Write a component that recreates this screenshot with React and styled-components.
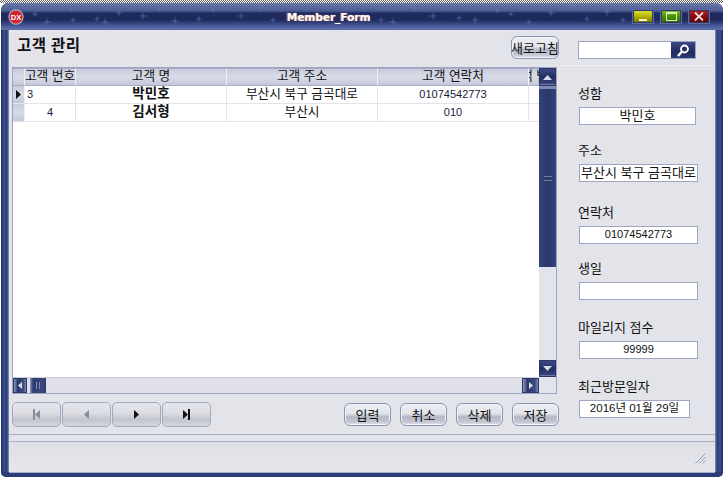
import React from "react";
import styled, { createGlobalStyle, css } from "styled-components";

const Global = createGlobalStyle`
  html, body { margin: 0; padding: 0; background: #fff; }
  * { box-sizing: border-box; }
  body { font-family: "Liberation Sans", "Noto Sans CJK KR", sans-serif; font-size: 12.7px; color: #111; }
`;

const Page = styled.div`
  width: 723px;
  height: 479px;
  padding: 0 0 2px 1px;
  background: #fff;
  overflow: hidden;
`;
const TopEdge = styled.div`
  height: 3px;
  margin-left: -1px;
  background-image: repeating-conic-gradient(#666 0 25%, #fff 0 50%);
  background-size: 2px 2px;
`;
const Frame = styled.div`
  width: 722px;
  height: 474px;
  border-radius: 7px 7px 5px 5px;
  display: flex;
  flex-direction: column;
  background: linear-gradient(90deg, #1d2c63 0, #3c5090 3px, #2b3c78 6px, #8b98c0 8px, #8b98c0 calc(100% - 8px), #2b3c78 calc(100% - 6px), #3c5090 calc(100% - 3px), #1d2c63 100%);
  box-shadow: inset 0 -5px 0 #2b3c78;
`;
const TitleBar = styled.div`
  position: relative;
  height: 27px;
  flex: none;
  border-radius: 7px 7px 0 0;
  overflow: hidden;
  display: flex;
  align-items: center;
  padding-left: 286px;
  background: linear-gradient(180deg, #6a78a8 0, #5f6fa2 3px, #4c5c92 8px, #1f2b60 10px, #1e2a5c 17px, #2c3a72 19px, #4a5a98 23px, #6272ac 27px);
`;
const Stars = styled.svg`
  position: absolute;
  inset: 0;
`;
const TitleText = styled.span`
  position: relative;
  font-family: "DejaVu Sans", sans-serif;
  font-weight: 700;
  font-size: 10.5px;
  color: #fff;
  text-shadow: -1px 0 1px #c98f70;
`;
const AppIcon = styled.svg`
  position: absolute;
  left: 7px;
  top: 6px;
`;
const WinButtons = styled.div`
  position: absolute;
  right: 14px;
  top: 7px;
  display: flex;
  gap: 8px;
`;
const WinButton = styled.div`
  width: 20px;
  height: 13px;
  border: 1px solid #2d3a6c;
  outline: 1px solid #5c6a9c;
  display: flex;
  align-items: center;
  justify-content: center;
  background: ${(p) => p.$bg};
`;
const Body = styled.div`
  flex: 1;
  margin: 0 8px 5px 8px;
  background: #e3e4ea;
  display: flex;
  flex-direction: column;
  min-height: 0;
  box-shadow: 0 1px 0 #a6aeca;
`;
const Main = styled.div`
  flex: none;
  height: 404px;
  display: flex;
`;
const LeftCol = styled.div`
  width: 551px;
  padding: 6px 0 0 3px;
  display: flex;
  flex-direction: column;
  flex: none;
`;
const Header = styled.div`
  height: 31px;
  display: flex;
  align-items: flex-start;
  justify-content: space-between;
  padding-right: 1px;
`;
const Heading = styled.h1`
  margin: 0 0 0 5px;
  font-size: 15.5px;
  line-height: 20px;
  letter-spacing: 0.4px;
  font-weight: 700;
  color: #111;
`;
const glossy = css`
  background: linear-gradient(180deg, #eceef3 0, #e2e4ea 45%, #b4b8c6 62%, #c4c7d2 85%, #e2e4ea 100%);
  border: 1px solid #8d93b0;
  border-radius: 6px;
  box-shadow: inset 0 0 0 1px #f3f4f7;
  color: #111;
  font-family: inherit;
  font-size: 13px;
  padding: 0;
  display: flex;
  align-items: center;
  justify-content: center;
  white-space: nowrap;
  overflow: hidden;
`;
const RefreshButton = styled.button`
  ${glossy}
  width: 48px;
  height: 23px;
`;
const Grid = styled.div`
  width: 545px;
  height: 327px;
  border: 1px solid #9da4c4;
  background: #fff;
  display: grid;
  grid-template-columns: 1fr 17px;
  grid-template-rows: 1fr 16px;
`;
const Table = styled.div`
  overflow: hidden;
  display: flex;
  flex-direction: column;
`;
const columns = "12px 51px 151px 151px 151px 12px";
const HeadRow = styled.div`
  display: grid;
  grid-template-columns: ${columns};
  height: 18px;
  flex: none;
`;
const HeadCell = styled.div`
  background: linear-gradient(180deg, #c7cbdc 0, #d9dce7 50%, #c3c8da 100%);
  border-top: 1px solid #a6acc8;
  border-right: 1px solid #eef0f5;
  border-bottom: 1px solid #a6acc8;
  display: flex;
  justify-content: center;
  line-height: 15px;
  white-space: nowrap;
  overflow: hidden;
`;
const Row = styled.div`
  display: grid;
  grid-template-columns: ${columns};
  height: 18px;
  flex: none;
  border-bottom: 1px solid #e3e4ea;
`;
const Indicator = styled.div`
  background: linear-gradient(180deg, #c7cbdc, #d9dce7 50%, #c3c8da);
  display: flex;
  align-items: center;
  justify-content: center;
  border-right: 1px solid #eef0f5;
`;
const Cell = styled.div`
  border-right: 1px solid #e3e4ea;
  line-height: 16px;
  white-space: nowrap;
  overflow: hidden;
  text-align: ${(p) => p.$align || "center"};
  padding-left: ${(p) => p.$pad || 0}px;
  font-weight: ${(p) => (p.$bold ? 700 : 400)};
  font-size: ${(p) => (p.$bold ? "13.5px" : p.$num ? "11px" : "inherit")};
  color: ${(p) => (p.$num ? "#1a1a40" : "#111")};
`;
const VScroll = styled.div`
  display: flex;
  flex-direction: column;
  background: #e3e4ea;
`;
const ScrollButton = styled.div`
  flex: none;
  display: flex;
  align-items: center;
  justify-content: center;
  width: ${(p) => p.$w || "100%"};
  height: ${(p) => p.$h || "100%"};
  background: ${(p) => (p.$wide ? "linear-gradient(90deg,#8f99bd,#2a3768 30%,#3d4c84 80%,#7f8ab2)" : "linear-gradient(180deg,#3d4c84,#222e60 50%,#34427a 90%,#8a94b8)")};
  border: 1px solid #2a3768;
`;
const VThumb = styled.div`
  flex: none;
  height: 181px;
  display: flex;
  align-items: center;
  justify-content: center;
  background: linear-gradient(90deg, #35437a, #2a3768 50%, #35437a);
  border-top: 3px solid #7f8ab2;
`;
const VTrack = styled.div`
  flex: 1;
`;
const Grip = styled.div`
  width: 8px;
  height: 5px;
  border-top: 1px solid #6f7ba8;
  border-bottom: 1px solid #6f7ba8;
`;
const HScroll = styled.div`
  display: flex;
  background: #dfe0e8;
  border-top: 1px solid #c9ccda;
`;
const HThumb = styled.div`
  width: 16px;
  margin-left: 3px;
  background: linear-gradient(90deg, #8f99bd, #2f3c70 20%, #3a4880 80%, #2a3768);
  display: flex;
  align-items: center;
  justify-content: center;
  gap: 2px;
`;
const HGrip = styled.i`
  width: 1px;
  height: 7px;
  background: #7f8ab2;
`;
const HSpacer = styled.div`
  flex: 1;
`;
const Corner = styled.div`
  background: #e3e4ea;
`;
const Footer = styled.div`
  display: flex;
  justify-content: space-between;
  padding-top: 8px;
  width: 547px;
`;
const NavGroup = styled.div`
  display: flex;
  gap: 1px;
`;
const NavButton = styled.button`
  width: 49px;
  height: 25px;
  border: 1px solid #a4a8bc;
  border-radius: 5px;
  padding: 0;
  background: linear-gradient(180deg, #e6e7ec 0, #dcdde3 45%, #c3c5ce 70%, #d5d6dd 100%);
  display: flex;
  align-items: center;
  justify-content: center;
`;
const ActionGroup = styled.div`
  display: flex;
  gap: 9px;
  padding-top: 1px;
`;
const ActionButton = styled.button`
  ${glossy}
  width: 47px;
  height: 23px;
`;
const RightCol = styled.div`
  flex: 1;
  display: flex;
  flex-direction: column;
`;
const SearchArea = styled.div`
  height: 36px;
  padding: 11px 0 0 18px;
  flex: none;
  border-bottom: 1px solid #f0f1f5;
`;
const SearchBox = styled.div`
  width: 118px;
  height: 18px;
  background: #fff;
  border: 1px solid #9da4c4;
  display: flex;
  justify-content: flex-end;
`;
const SearchButton = styled.div`
  width: 24px;
  background: linear-gradient(180deg, #3a4880, #1f2b60 60%, #2c3a72);
  display: flex;
  align-items: center;
  justify-content: center;
`;
const Fields = styled.div`
  padding: 0 0 0 18px;
  display: flex;
  flex-direction: column;
`;
const Label = styled.label`
  display: block;
  line-height: 16px;
  font-size: 13px;
  margin-top: ${(p) => p.$top}px;
  margin-bottom: 5px;
`;
const Value = styled.div`
  margin-left: 1px;
  height: 18px;
  width: ${(p) => p.$w}px;
  background: #fff;
  border: 1px solid #9da4c4;
  line-height: 15px;
  text-align: center;
  white-space: nowrap;
  overflow: hidden;
  font-size: ${(p) => p.$size || 13}px;
`;
const Divider = styled.div`
  height: 8px;
  flex: none;
  border-top: 1px solid #a6aeca;
  border-bottom: 1px solid #a6aeca;
`;
const Status = styled.div`
  flex: 1;
  display: flex;
  justify-content: flex-end;
  align-items: flex-end;
  padding: 0 9px 8px 0;
  background: linear-gradient(180deg, #dfe0e6, #e6e7ec);
`;

const starSpots = [
  [34,14,2],[46,22,3],[70,9,1],[72,20,2],[96,19,2],[104,22,3],[118,13,2],[142,16,3],[158,9,1],[174,21,3],[198,19,2],[212,10,1],[240,16,2],
  [258,8,3],[272,20,2],[380,20,2],[392,22,3],[414,8,2],[432,16,3],[458,18,2],[474,20,3],[496,10,2],[510,14,1],[528,22,2],[550,13,3],[572,6,2],[586,19,2],[606,12,3],[622,20,2],[642,6,2],[672,20,2],
];

const Star = ({ x, y, s }) => (
  <path
    d={`M${x} ${y - 2 - s}L${x + 0.8} ${y - 0.8}L${x + 2 + s} ${y}L${x + 0.8} ${y + 0.8}L${x} ${y + 2 + s}L${x - 0.8} ${y + 0.8}L${x - 2 - s} ${y}L${x - 0.8} ${y - 0.8}Z`}
    fill="#6a7cbc"
    opacity="0.5"
  />
);

const Arrow = ({ dir, color = "#111", w = 5, h = 9 }) => {
  const pts = {
    right: `0,0 ${w},${h / 2} 0,${h}`,
    left: `${w},0 0,${h / 2} ${w},${h}`,
  }[dir];
  return (
    <svg width={w} height={h} viewBox={`0 0 ${w} ${h}`}>
      <polygon points={pts} fill={color} />
    </svg>
  );
};

const Tri = ({ up }) => (
  <svg width="9" height="5" viewBox="0 0 9 5">
    <polygon points={up ? "0,5 4.5,0 9,5" : "0,0 4.5,5 9,0"} fill="#d7dcec" />
  </svg>
);

const EdgeArrow = ({ right, color }) => (
  <svg width="7" height="11" viewBox="0 0 7 11">
    {right ? (
      <>
        <polygon points="0,1 5,5.5 0,10" fill={color} />
        <rect x="5" y="0" width="2" height="11" fill={color} />
      </>
    ) : (
      <>
        <rect x="0" y="0" width="2" height="11" fill={color} />
        <polygon points="7,1 2,5.5 7,10" fill={color} />
      </>
    )}
  </svg>
);

export default function App() {
  return (
    <Page>
      <Global />
      <TopEdge />
      <Frame>
        <TitleBar>
          <Stars width="722" height="27">
            {starSpots.map(([x, y, s], i) => (
              <Star key={i} x={x} y={y - 3} s={s} />
            ))}
          </Stars>
          <AppIcon width="16" height="16" viewBox="0 0 16 16">
            <circle cx="8" cy="8" r="7.7" fill="#aab0c4" />
            <circle cx="8" cy="8" r="6.6" fill="#d3242f" />
            <text x="8" y="10.6" textAnchor="middle" fontSize="7.5" fontWeight="700" fill="#fff" fontFamily="Liberation Sans, sans-serif">DX</text>
          </AppIcon>
          <TitleText>Member_Form</TitleText>
          <WinButtons>
            <WinButton $bg="linear-gradient(180deg,#dcdc30,#b8b800 45%,#7c7c00 100%)">
              <svg width="9" height="10" viewBox="0 0 9 10"><rect x="0" y="7" width="8" height="2" fill="#f4f4c8" /></svg>
            </WinButton>
            <WinButton $bg="linear-gradient(180deg,#7cbc20,#4f9600 45%,#2f6c00 100%)">
              <svg width="11" height="9" viewBox="0 0 11 9"><rect x="0.5" y="0.5" width="10" height="8" fill="none" stroke="#d8eec0" /><rect x="0" y="0" width="11" height="2" fill="#d8eec0" /></svg>
            </WinButton>
            <WinButton $bg="linear-gradient(180deg,#b82020,#8c0c0c 45%,#640404 100%)">
              <svg width="10" height="9" viewBox="0 0 10 9"><path d="M1 0.5L9 8.5M9 0.5L1 8.5" stroke="#f2dcdc" strokeWidth="1.8" /></svg>
            </WinButton>
          </WinButtons>
        </TitleBar>
        <Body>
          <Main>
            <LeftCol>
              <Header>
                <Heading>고객 관리</Heading>
                <RefreshButton>새로고침</RefreshButton>
              </Header>
              <Grid>
                <Table>
                  <HeadRow>
                    <HeadCell />
                    <HeadCell>고객 번호</HeadCell>
                    <HeadCell>고객 명</HeadCell>
                    <HeadCell>고객 주소</HeadCell>
                    <HeadCell>고객 연락처</HeadCell>
                    <HeadCell>고객 번호</HeadCell>
                  </HeadRow>
                  <Row>
                    <Indicator><Arrow dir="right" w={5} h={9} /></Indicator>
                    <Cell $num $align="left" $pad={2}>3</Cell>
                    <Cell $bold>박민호</Cell>
                    <Cell>부산시 북구 금곡대로</Cell>
                    <Cell $num>01074542773</Cell>
                    <Cell />
                  </Row>
                  <Row>
                    <Indicator />
                    <Cell $num>4</Cell>
                    <Cell $bold>김서형</Cell>
                    <Cell>부산시</Cell>
                    <Cell $num>010</Cell>
                    <Cell />
                  </Row>
                </Table>
                <VScroll>
                  <ScrollButton $h="18px"><Tri up /></ScrollButton>
                  <VThumb><Grip /></VThumb>
                  <VTrack />
                  <ScrollButton $h="17px"><Tri /></ScrollButton>
                </VScroll>
                <HScroll>
                  <ScrollButton $wide $w="14px"><Arrow dir="left" color="#d7dcec" w={4} h={7} /></ScrollButton>
                  <HThumb><HGrip /><HGrip /></HThumb>
                  <HSpacer />
                  <ScrollButton $wide $w="17px"><Arrow dir="right" color="#d7dcec" w={4} h={7} /></ScrollButton>
                </HScroll>
                <Corner />
              </Grid>
              <Footer>
                <NavGroup>
                  <NavButton><EdgeArrow color="#8a8d98" /></NavButton>
                  <NavButton><Arrow dir="left" color="#8a8d98" /></NavButton>
                  <NavButton><Arrow dir="right" /></NavButton>
                  <NavButton><EdgeArrow right color="#111" /></NavButton>
                </NavGroup>
                <ActionGroup>
                  <ActionButton>입력</ActionButton>
                  <ActionButton>취소</ActionButton>
                  <ActionButton>삭제</ActionButton>
                  <ActionButton>저장</ActionButton>
                </ActionGroup>
              </Footer>
            </LeftCol>
            <RightCol>
              <SearchArea>
                <SearchBox>
                  <SearchButton>
                    <svg width="14" height="13" viewBox="0 0 14 13">
                      <circle cx="8.5" cy="5" r="3.5" fill="none" stroke="#fff" strokeWidth="1.8" />
                      <path d="M6 7.5L2 12" stroke="#fff" strokeWidth="2.4" />
                    </svg>
                  </SearchButton>
                </SearchBox>
              </SearchArea>
              <Fields>
                <Label $top={20}>성함</Label>
                <Value $w={117}>박민호</Value>
                <Label $top={18}>주소</Label>
                <Value $w={119}>부산시 북구 금곡대로</Value>
                <Label $top={23}>연락처</Label>
                <Value $w={119} $size={11}>01074542773</Value>
                <Label $top={17}>생일</Label>
                <Value $w={119} />
                <Label $top={20}>마일리지 점수</Label>
                <Value $w={119} $size={11}>99999</Value>
                <Label $top={20}>최근방문일자</Label>
                <Value $w={111} $size={11.5}>2016년 01월 29일</Value>
              </Fields>
            </RightCol>
          </Main>
          <Divider />
          <Status>
            <svg width="11" height="11" viewBox="0 0 11 11">
              <path d="M0.5 10.5L10.5 0.5M4 10.5L10.5 4M7.5 10.5L10.5 7.5" stroke="#9aa0b0" strokeWidth="1" />
            </svg>
          </Status>
        </Body>
      </Frame>
    </Page>
  );
}
